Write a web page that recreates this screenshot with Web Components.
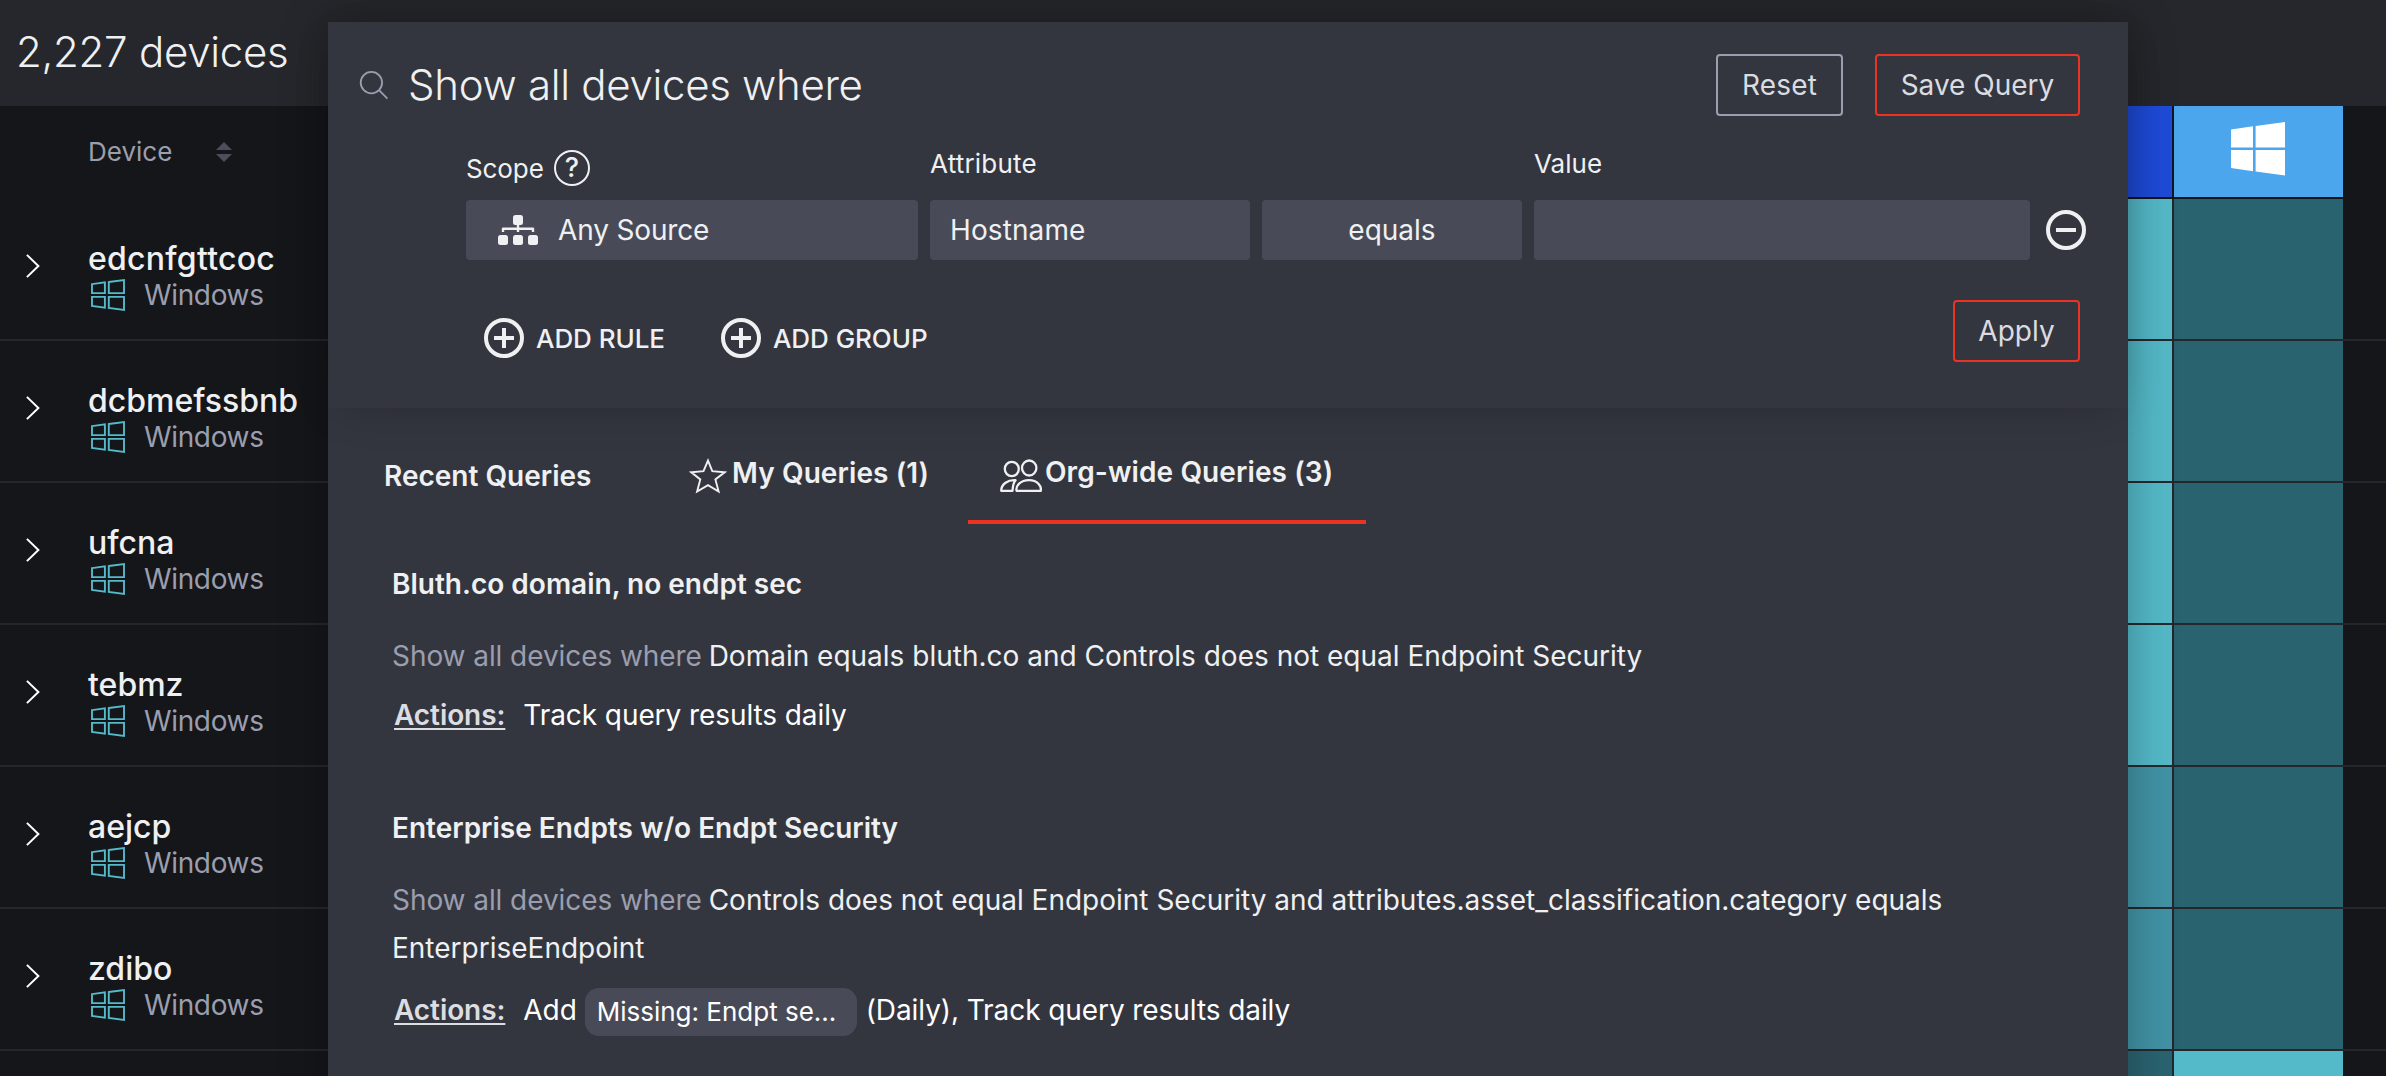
<!DOCTYPE html>
<html lang="en">
<head>
<meta charset="utf-8">
<title>Devices</title>
<style>
html,body{margin:0;height:100%;overflow:hidden;background:#15161a}
body{font-family:Inter,"Liberation Sans",sans-serif;font-size:28px;color:#eff0f2}
</style>
</head>
<body>
<devices-page></devices-page>
<script>
const define = (name, html) => customElements.define(name, class extends HTMLElement {
  constructor() {
    super();
    const t = document.createElement('template');
    t.innerHTML = '<style>*{box-sizing:border-box}</style>' + html;
    this.attachShadow({ mode: 'open' }).append(t.content);
  }
});

/* icons */
define('icon-search', `<style>:host{display:block;width:30px;height:30px}svg{display:block}</style>
<svg width="30" height="30" fill="none" stroke="#9b9eae" stroke-width="1.8"><circle cx="13.4" cy="12.6" r="10.7"/><path d="M21 20.2 29.4 28.6"/></svg>`);
define('icon-help', `<style>:host{display:flex;align-items:center;justify-content:center;width:36px;height:36px;border:2.5px solid #eff0f2;border-radius:50%;font-size:27px;font-weight:500;line-height:32px}</style>?`);
define('icon-sitemap', `<style>:host{display:block;width:40px;height:30px}svg{display:block}</style>
<svg width="40" height="30" fill="#eff0f2"><rect x="15" y="0" width="10" height="10" rx="2.5"/><rect y="20" width="10" height="10" rx="2.5"/><rect x="15" y="20" width="10" height="10" rx="2.5"/><rect x="30" y="20" width="10" height="10" rx="2.5"/><path d="M5 17v-3.2h30V17M20 9v8" fill="none" stroke="#eff0f2" stroke-width="2.4" stroke-linejoin="round"/></svg>`);
define('icon-circle', `<style>:host{display:block;width:40px;height:40px;flex:none}svg{display:block}.v{display:none}:host([plus]) .v{display:inline}</style>
<svg width="40" height="40" fill="none" stroke="#eff0f2" stroke-width="4"><circle cx="20" cy="20" r="18"/><path d="M10 20h20"/><path class="v" d="M20 10v20"/></svg>`);
define('icon-star', `<style>:host{display:block;width:38px;height:36px}svg{display:block}</style>
<svg width="38" height="36" fill="none" stroke="#eff0f2" stroke-width="1.9"><path d="M19 2.6 23.3 13.2 35.6 14.3 26.4 21.4 29.6 33.6 19 27.2 8.1 33.6 11.3 21.4 2.3 14.3 14.5 13.2Z"/></svg>`);
define('icon-users', `<style>:host{display:block;width:42px;height:34px}svg{display:block}</style>
<svg width="42" height="34" fill="none" stroke="#eff0f2" stroke-width="2.3" stroke-linejoin="round"><ellipse cx="11.8" cy="10" rx="7" ry="7.2"/><ellipse cx="29.2" cy="9" rx="7.2" ry="7.5"/><path d="M15.6 21.2C8 20.6 1.2 25.2 1.2 31.8H12.5C12.8 27 13.2 23.6 15.6 21.2Z"/><path d="M16.6 31.8C15.4 27 20.4 21.2 29 21.2S41.6 27 40.8 31.8Z"/></svg>`);
define('icon-windows', `<style>:host{display:block;width:34px;height:32px}svg{display:block}</style>
<svg width="34" height="32" fill="none" stroke="#54b9c8" stroke-width="1.9"><path d="M1 5.1 13.9 3.4V14.1H1ZM17.8 3 33 1.1V14.1H17.8ZM1 17.9H13.9V28.6L1 26.9ZM17.8 17.9H33V30.9L17.8 29Z"/></svg>`);
define('icon-windows-solid', `<style>:host{display:block;width:54px;height:54px}svg{display:block}</style>
<svg width="54" height="54" fill="#fff"><path d="M0 7.6 22 4.3V25.6H0ZM24.6 3.9 54 0V25.6H24.6ZM0 28H22V49.2L0 46ZM24.6 28H54V53.5L24.6 49.6Z"/></svg>`);
define('icon-chevron', `<style>:host{display:block;width:14px;height:24px}svg{display:block}</style>
<svg width="14" height="24" fill="none" stroke="#fff" stroke-width="2"><path d="M.9.9 12.4 12 .9 23.1"/></svg>`);
define('icon-sort', `<style>:host{display:block;width:16px;height:20px}svg{display:block}</style>
<svg width="16" height="20" fill="#4c4e5c"><path d="M8 0 16 8H0ZM8 20 0 12H16Z"/></svg>`);

/* controls */
define('ui-button', `<style>:host{display:flex;align-items:center;justify-content:center;height:62px;border:2px solid #ec3323;border-radius:4px;color:#dbdce0;line-height:58px;white-space:nowrap}:host([plain]){border-color:#9b9eae}</style><slot></slot>`);
define('ui-field', `<style>:host{display:flex;align-items:center;height:60px;padding-left:20px;background:#484b57;border-radius:4px;line-height:60px}:host([center]){padding:0;justify-content:center}</style><slot></slot>`);
define('add-button', `<style>:host{display:flex;align-items:center;gap:12px;font-size:26px;font-weight:500;letter-spacing:-.05px;white-space:nowrap}</style><icon-circle plus></icon-circle><slot></slot>`);
define('action-chip', `<style>:host{display:block;height:48px;width:272px;padding-left:12px;margin:0 9px 0 8px;background:#484b57;border-radius:14px;font-size:26px;line-height:47px;letter-spacing:0}</style><slot></slot>`);

define('saved-query', `<style>
:host{display:block}
h3{margin:0;font-size:28px;line-height:40px;font-weight:600}
p{margin:28px 0 0;line-height:48px}
.dim{color:#9b9eae;letter-spacing:-.07px;margin-right:-1px}
.act{display:flex;align-items:flex-start;color:#fff;height:48px;margin-top:var(--act-gap,13px);line-height:44px;letter-spacing:-.08px}
b{font-weight:600;color:#dcdde1;text-decoration:underline;text-decoration-thickness:2px;text-underline-offset:3px;text-decoration-skip-ink:none;margin:0 18px 0 2px}
::slotted([slot=actions]){display:flex}
</style><h3><slot name="title"></slot></h3><p><span class="dim">Show all devices where </span><slot name="rule"></slot></p>
<div class="act"><b>Actions:</b><slot name="actions"></slot></div>`);

define('query-tabs', `<style>
:host{display:flex;height:116px;padding-left:32px;font-weight:600;white-space:nowrap}
div{display:flex;align-items:flex-start;height:116px;line-height:36px}
.a{padding:50px 0 0 24px;width:329px}
.b{width:279px;padding-top:47px;letter-spacing:.1px}
.c{width:398px;padding:46px 0 0 31px;border-bottom:4px solid #ec3323;letter-spacing:.1px}
icon-star{margin:3px 5px 0 0}
icon-users{margin:5px 3px 0 1px}
</style><div class="a">Recent Queries</div><div class="b"><icon-star></icon-star>My Queries (1)</div><div class="c"><icon-users></icon-users>Org-wide Queries (3)</div>`);

define('query-builder', `<style>
:host{display:block;height:386px;padding:32px 48px 0 30px;position:relative;background:#34363f;box-shadow:0 10px 40px -14px rgba(0,0,0,.25)}
.top{display:flex;align-items:center;height:62px}
h1{margin:0 auto 0 20px;font-size:42px;line-height:60px;font-weight:300;letter-spacing:-.3px}
.top ui-button+ui-button{margin-left:32px}
.labels,.fields{display:flex;margin-left:108px}
.labels{font-size:26px;height:84px;line-height:36px;padding-top:30px}
.labels span:nth-child(1){width:464px;display:flex;padding-top:5px;gap:10px;letter-spacing:-.1px}
.labels icon-help{margin-top:-1px}
.labels span:nth-child(2){width:604px;letter-spacing:.2px}
.fields{gap:12px;margin-right:-6px}
icon-sitemap{margin:0 20px 0 12px}
.fields icon-circle{margin:10px 0 0 4px}
.bot{display:flex;margin:40px 0 0 126px;align-items:flex-start}
add-button{margin:18px 56px 0 0;height:40px}
.bot ui-button{margin-left:auto;width:127px}
</style>
<div class="top"><icon-search></icon-search><h1>Show all devices where</h1><ui-button plain style="width:127px;letter-spacing:.2px">Reset</ui-button><ui-button style="width:205px">Save Query</ui-button></div>
<div class="labels"><span>Scope<icon-help></icon-help></span><span>Attribute</span><span>Value</span></div>
<div class="fields"><ui-field style="width:452px;letter-spacing:-.15px"><icon-sitemap></icon-sitemap>Any Source</ui-field><ui-field style="width:320px;letter-spacing:.1px">Hostname</ui-field><ui-field center style="width:260px">equals</ui-field><ui-field style="width:496px"></ui-field><icon-circle></icon-circle></div>
<div class="bot"><add-button>ADD RULE</add-button><add-button>ADD GROUP</add-button><ui-button>Apply</ui-button></div>`);

define('query-panel', `<style>
:host{display:block;position:absolute;left:328px;top:22px;width:1800px;height:1100px;background:#34363f;box-shadow:0 0 44px rgba(0,0,0,.3)}
.list{padding:40px 100px 0 64px;display:flex;flex-direction:column;gap:67px}
.chipped{--act-gap:16px}
</style><query-builder></query-builder><query-tabs></query-tabs>
<div class="list">
<saved-query><span slot="title">Bluth.co domain, no endpt sec</span><span slot="rule">Domain equals bluth.co and Controls does not equal Endpoint Security</span><span slot="actions">Track query results daily</span></saved-query>
<saved-query class="chipped"><span slot="title">Enterprise Endpts w/o Endpt Security</span><span slot="rule">Controls does not equal Endpoint Security and attributes.asset_classification.category equals EnterpriseEndpoint</span><span slot="actions">Add<action-chip>Missing: Endpt se...</action-chip>(Daily), Track query results daily</span></saved-query>
</div>`);

/* table */
define('device-row', `<style>
:host{display:flex;height:142px;border-bottom:2px solid #26272c}
.exp{width:88px;padding:55px 0 0 26px}
.info{flex:1;padding-top:42px}
.name{font-size:32px;line-height:36px;font-weight:500;height:36px}
.os{display:flex;align-items:center;line-height:36px;color:#9b9eae;letter-spacing:-.35px;gap:19px;padding-left:3px}
:host([bare]) .os,:host([bare]) icon-chevron{display:none}
.cell{width:200px;background:var(--a,#54b9c8);border-right:2px solid #26272c}
.cell.w{width:169px;background:var(--b,#2a6370);border:0;margin-right:43px}
</style><div class="exp"><icon-chevron></icon-chevron></div><div class="info"><div class="name"><slot></slot></div><div class="os"><icon-windows></icon-windows>Windows</div></div><div class="cell"></div><div class="cell w"></div>`);

define('device-table', `<style>
:host{display:block}
.head{display:flex;height:91px;margin-bottom:2px;align-items:stretch}
.dev{flex:1;padding:0 0 0 88px;display:flex;align-items:center;gap:44px;font-size:26px;color:#9b9eae}
.blue{width:198px;background:#1e4bd8;margin-right:2px}
.win{width:169px;background:#4ba6ee;margin-right:43px;display:flex;justify-content:center;padding:16px 2px 0 0}
</style><div class="head"><div class="dev">Device<icon-sort></icon-sort></div><div class="blue"></div><div class="win"><icon-windows-solid></icon-windows-solid></div></div>
<device-row style="letter-spacing:.25px">edcnfgttcoc</device-row><device-row>dcbmefssbnb</device-row><device-row>ufcna</device-row><device-row>tebmz</device-row>
<device-row style="--a:#4193a5">aejcp</device-row><device-row style="--a:#4193a5">zdibo</device-row>
<device-row bare style="--a:#2a6370;--b:#54b9c8"></device-row>`);

define('devices-page', `<style>
:host{display:block;position:relative;width:2386px;height:1076px;overflow:hidden}
header{height:106px;background:#26272c;padding:22px 0 0 16px;font-size:42px;line-height:60px;font-weight:300;letter-spacing:-.27px}
</style><header>2,227 devices</header><device-table></device-table><query-panel></query-panel>`);
</script>
</body>
</html>
